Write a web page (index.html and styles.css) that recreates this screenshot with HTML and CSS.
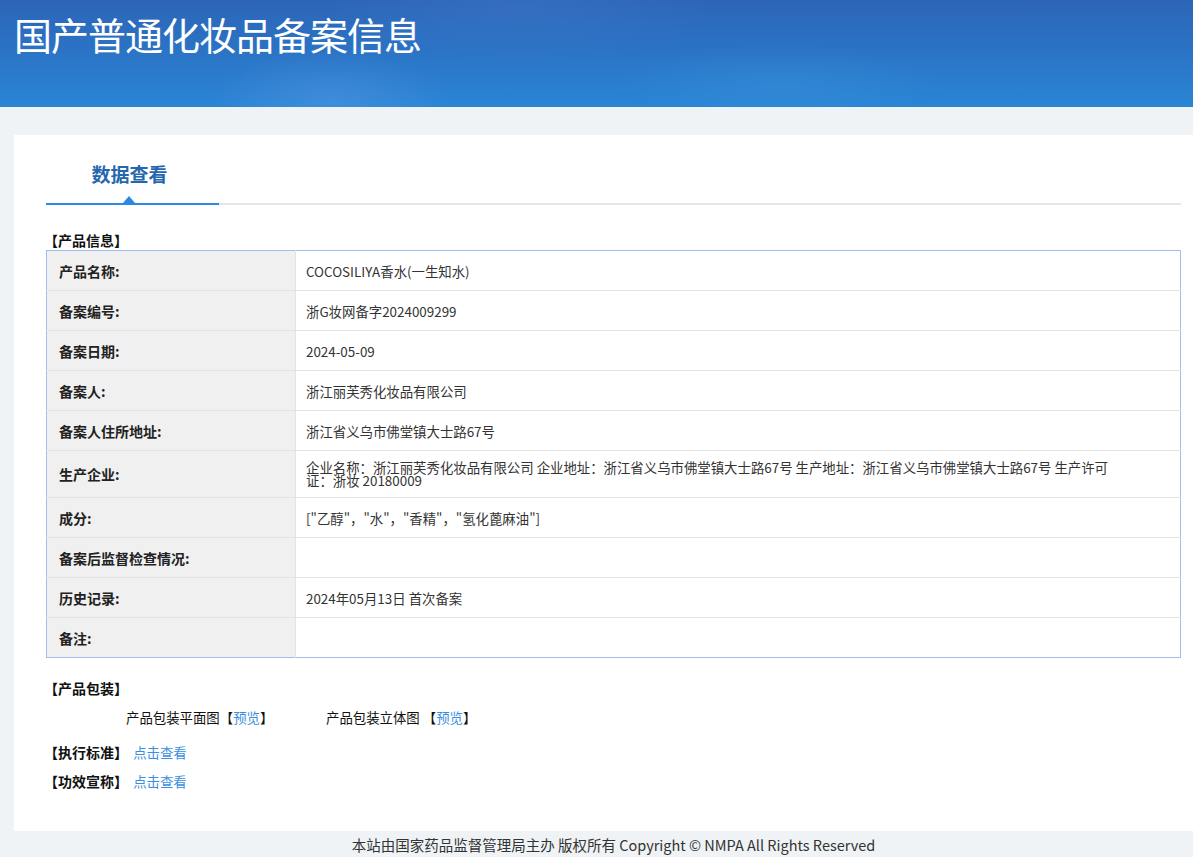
FILE: index.html
```html
<!DOCTYPE html>
<html lang="zh-CN">
<head>
    <meta charset="UTF-8">
    <meta name="viewport" content="width=device-width, initial-scale=1.0">
    <title>国产普通化妆品备案信息</title>
    <link rel="stylesheet" href="styles.css">
</head>
<body>
<div class="page">
    <div class="header">
        <h1 class="title">国产普通化妆品备案信息</h1>
    </div>

    <div class="main">
        <div class="card">
            <div class="tabs">
                <div class="tab active">数据查看</div>
            </div>

            <div class="section-title">【产品信息】</div>
            <table class="info">
                <tr><th>产品名称:</th><td>COCOSILIYA香水(一生知水)</td></tr>
                <tr><th>备案编号:</th><td>浙G妆网备字2024009299</td></tr>
                <tr><th>备案日期:</th><td>2024-05-09</td></tr>
                <tr><th>备案人:</th><td>浙江丽芙秀化妆品有限公司</td></tr>
                <tr><th>备案人住所地址:</th><td>浙江省义乌市佛堂镇大士路67号</td></tr>
                <tr class="tall"><th>生产企业:</th><td class="wrap">企业名称：浙江丽芙秀化妆品有限公司 企业地址：浙江省义乌市佛堂镇大士路67号 生产地址：浙江省义乌市佛堂镇大士路67号 生产许可证：浙妆 20180009</td></tr>
                <tr><th>成分:</th><td>["乙醇"，"水"，"香精"，"氢化蓖麻油"]</td></tr>
                <tr><th>备案后监督检查情况:</th><td></td></tr>
                <tr><th>历史记录:</th><td>2024年05月13日 首次备案</td></tr>
                <tr><th>备注:</th><td></td></tr>
            </table>

            <div class="section-title pack-title">【产品包装】</div>
            <div class="pack">
                <span class="pack-item">产品包装平面图【<a href="#">预览</a>】</span>
                <span class="pack-item">产品包装立体图 【<a href="#">预览</a>】</span>
            </div>

            <div class="section-title line">【执行标准】 <a href="#">点击查看</a></div>
            <div class="section-title line">【功效宣称】 <a href="#">点击查看</a></div>
        </div>
    </div>

    <div class="footer">本站由国家药品监督管理局主办 版权所有 Copyright © NMPA All Rights Reserved</div>
</div>
</body>
</html>
```

FILE: styles.css
```css
body {
    margin: 0;
    background: #eff3f6;
    font-family: "Noto Sans CJK SC", "Open Sans", sans-serif;
    color: #333;
    font-size: 13.4px;
    overflow-x: hidden;
}
a {
    color: #3b8fe0;
    text-decoration: none;
}
.page {
    width: 1227px;
}
.header {
    height: 107px;
    background:
        radial-gradient(ellipse 120px 50px at 330px 100px, rgba(120, 170, 240, 0.25), transparent),
        radial-gradient(ellipse 160px 40px at 780px 85px, rgba(60, 150, 220, 0.35), transparent),
        radial-gradient(ellipse 200px 60px at 520px 5px, rgba(80, 130, 210, 0.25), transparent),
        linear-gradient(180deg, #2c65b7 0%, #2b74c6 50%, #2a85d5 100%);
    overflow: hidden;
}
.title {
    margin: 0;
    padding: 10px 0 0 14px;
    font-size: 38px;
    line-height: 48px;
    font-weight: normal;
    color: #fff;
    letter-spacing: -1px;
}
.main {
    padding: 28px 14px 0;
}
.card {
    background: #fff;
    padding: 0 32px 40px;
}
.tabs {
    padding-top: 26px;
    border-bottom: 2px solid #e6e6e6;
    display: flex;
}
.tab {
    width: 173px;
    text-indent: -6px;
    text-align: center;
    font-size: 19px;
    font-weight: bold;
    line-height: 26px;
    padding-bottom: 16px;
    color: #2567ae;
    position: relative;
}
.tab.active {
    border-bottom: 2px solid #2a8ae0;
    margin-bottom: -2px;
}
.tab.active::after {
    content: "";
    position: absolute;
    left: 50%;
    bottom: 0;
    margin-left: -10px;
    border: 6px solid transparent;
    border-bottom-color: #2a8ae0;
    border-bottom-width: 7px;
}
.section-title {
    font-size: 14px;
    font-weight: bold;
    color: #111;
    line-height: 20px;
    margin-top: 25px;
    margin-left: -2px;
}
.info {
    width: 100%;
    border-collapse: collapse;
    border: 1px solid #9ec0ec;
}
.info th,
.info td {
    height: 39px;
    border-bottom: 1px solid #e3e3e3;
    padding: 0;
    vertical-align: middle;
    text-align: left;
    line-height: 14px;
}
.info th {
    width: 236px;
    padding-left: 12px;
    background: #f0f0f0;
    border-right: 1px solid #e3e3e3;
    color: #222;
    font-size: 14px;
    font-weight: bold;
}
.info td {
    padding-left: 10px;
    color: #333;
}
.info tr.tall th,
.info td.wrap {
    height: 46px;
}
.info td.wrap {
    padding-right: 70px;
    line-height: 13px;
}
.info tr:last-child th,
.info tr:last-child td {
    border-bottom: none;
}
.pack-title {
    margin-top: 20px;
}
.pack {
    display: flex;
    padding-left: 80px;
    margin-top: 9px;
    line-height: 20px;
    color: #111;
}
.pack-item {
    width: 200px;
}
.line {
    margin-top: 15px;
}
.line + .line {
    margin-top: 9px;
}
.line a {
    font-size: 13.4px;
    font-weight: normal;
    margin-left: 2px;
}
.footer {
    text-align: center;
    font-size: 14.5px;
    line-height: 28px;
    color: #333;
}
```
